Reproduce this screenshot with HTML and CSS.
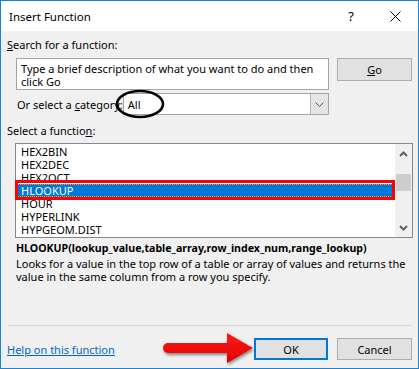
FILE: index.html
```html
<!DOCTYPE html>
<html lang="en">
<head>
    <meta charset="UTF-8">
    <title>Insert Function</title>
    <link rel="stylesheet" href="styles.css">
</head>
<body>
<div class="dialog">
    <div class="titlebar">
        <span class="title">Insert Function</span>
        <span class="help-btn">?</span>
        <span class="close-btn">
            <svg width="11" height="11" viewBox="0 0 11 11"><path d="M0.5 0.5 L10.5 10.5 M10.5 0.5 L0.5 10.5" stroke="#000" stroke-width="1" fill="none"/></svg>
        </span>
    </div>
    <div class="content">
        <div class="label"><u>S</u>earch for a function:</div>
        <div class="search-row">
            <div class="search-box">Type a brief description of what you want to do and then<br>click Go</div>
            <div class="btn go-btn"><u>G</u>o</div>
        </div>
        <div class="category-row">
            <span class="category-label">Or select a <u>c</u>ategory:</span>
            <div class="select">
                <span class="select-value">All</span>
                <span class="select-arrow">
                    <svg width="9" height="5" viewBox="0 0 9 5"><path d="M0.5 0.5 L4.5 4.5 L8.5 0.5" stroke="#555" fill="none"/></svg>
                </span>
            </div>
            <svg class="circle-mark" width="50" height="30" viewBox="0 0 50 30"><ellipse cx="25" cy="15" rx="23" ry="13" stroke="#000" stroke-width="2.6" fill="none"/></svg>
        </div>
        <div class="label label-list">Select a functio<u>n</u>:</div>
        <div class="listbox">
            <ul class="items">
                <li>HEX2BIN</li>
                <li>HEX2DEC</li>
                <li>HEX2OCT</li>
                <li class="selected">HLOOKUP</li>
                <li>HOUR</li>
                <li>HYPERLINK</li>
                <li>HYPGEOM.DIST</li>
            </ul>
            <div class="scrollbar">
                <svg class="scroll-up" width="9" height="6" viewBox="0 0 9 6"><path d="M1 5 L4.5 1.5 L8 5" stroke="#606060" stroke-width="2" fill="none"/></svg>
                <div class="thumb"></div>
                <svg class="scroll-down" width="9" height="6" viewBox="0 0 9 6"><path d="M1 1 L4.5 4.5 L8 1" stroke="#606060" stroke-width="2" fill="none"/></svg>
            </div>
            <div class="red-box"></div>
        </div>
        <div class="signature">HLOOKUP(lookup_value,table_array,row_index_num,range_lookup)</div>
        <div class="description">Looks for a value in the top row of a table or array of values and returns the<br>value in the same column from a row you specify.</div>
        <div class="separator"></div>
        <div class="footer">
            <a class="help-link" href="#">Help on this function</a>
            <svg class="arrow" width="100" height="40" viewBox="0 0 100 40">
                <defs>
                    <filter id="shadow" x="-20%" y="-30%" width="140%" height="170%">
                        <feDropShadow dx="1" dy="2" stdDeviation="1.5" flood-color="#000" flood-opacity="0.45"/>
                    </filter>
                    <linearGradient id="red" x1="0" y1="0" x2="0" y2="1">
                        <stop offset="0" stop-color="#ff1a1a"/>
                        <stop offset="1" stop-color="#e00000"/>
                    </linearGradient>
                </defs>
                <path d="M8 13 L67 13 L67 3 L93 18 L67 33 L67 23 L8 23 A5 5 0 0 1 8 13 Z" fill="url(#red)" filter="url(#shadow)"/>
            </svg>
            <div class="btn ok-btn">OK</div>
            <div class="btn cancel-btn">Cancel</div>
        </div>
    </div>
</div>
</body>
</html>
```

FILE: styles.css
```css
body {
    margin: 0;
    font-family: "Noto Sans", "Open Sans", sans-serif;
    font-size: 11px;
    color: #000;
    background: #fff;
}
.dialog {
    width: 419px;
    height: 369px;
    box-sizing: border-box;
    border: 1px solid #1883d7;
    background-color: #f0f0f0;
    overflow: hidden;
}
.titlebar {
    height: 30px;
    background-color: #fff;
    display: flex;
    align-items: center;
    padding-left: 8px;
}
.title {
    flex: 1;
    font-size: 11.5px;
}
.help-btn {
    font-size: 13px;
    margin-right: 36px;
}
.close-btn {
    display: flex;
    margin-right: 17px;
    margin-top: 1px;
}
.content {
    padding: 7px 6px 0 6px;
}
.label {
    line-height: 14px;
}
.search-row {
    display: flex;
    align-items: flex-start;
    margin-top: 6px;
    margin-left: 9px;
    gap: 8px;
}
.search-box {
    width: 313px;
    height: 32px;
    box-sizing: border-box;
    border: 1px solid #a5a5a5;
    background-color: #fff;
    padding: 3px 4px 0 4px;
    line-height: 13px;
    white-space: nowrap;
}
.btn {
    height: 22px;
    box-sizing: border-box;
    border: 1px solid #adadad;
    background-color: #e1e1e1;
    display: flex;
    align-items: center;
    justify-content: center;
}
.go-btn {
    width: 75px;
    height: 23px;
}
.category-row {
    position: relative;
    display: flex;
    align-items: center;
    margin-top: 3px;
    height: 22px;
}
.category-label {
    flex: 1;
    padding-left: 10px;
    white-space: nowrap;
}
.select {
    width: 207px;
    height: 22px;
    box-sizing: border-box;
    margin-right: 83px;
    border: 1px solid #a5a5a5;
    background-color: #fff;
    display: flex;
    align-items: center;
}
.select-value {
    flex: 1;
    padding-left: 4px;
}
.select-arrow {
    width: 17px;
    height: 20px;
    background-color: #e5e5e5;
    border-left: 1px solid #b5b5b5;
    display: flex;
    align-items: center;
    justify-content: center;
}
.circle-mark {
    position: absolute;
    left: 108px;
    top: -4px;
}
.label-list {
    margin-top: 9px;
}
.listbox {
    position: relative;
    margin-top: 5px;
    margin-left: 8px;
    width: 398px;
    height: 95px;
    box-sizing: border-box;
    border: 1px solid #828790;
    background-color: #fff;
    display: flex;
}
.items {
    list-style: none;
    margin: 0;
    padding: 1px 0 0 0;
    flex: 1;
}
.items li {
    height: 13px;
    line-height: 13px;
    padding-left: 5px;
}
.items li.selected {
    background-color: #0078d7;
    color: #fff;
    outline: 1px dotted #f0a030;
    outline-offset: -1px;
}
.scrollbar {
    width: 17px;
    background-color: #f0f0f0;
    display: flex;
    flex-direction: column;
    align-items: center;
}
.scroll-up {
    margin-top: 7px;
}
.thumb {
    width: 15px;
    height: 17px;
    background-color: #cdcdcd;
    margin-top: 17px;
}
.scroll-down {
    margin-top: auto;
    margin-bottom: 6px;
}
.red-box {
    position: absolute;
    left: -1px;
    top: 36px;
    width: 380px;
    height: 20px;
    border: 3px solid #ff0000;
    box-sizing: border-box;
}
.signature {
    font-weight: bold;
    font-size: 10.6px;
    margin-top: 3px;
    margin-left: 9px;
    line-height: 14px;
}
.description {
    margin-top: 2px;
    margin-left: 9px;
    line-height: 13px;
    white-space: nowrap;
}
.separator {
    height: 1px;
    background-color: #d9d9d9;
    margin-top: 42px;
    margin-left: 1px;
    width: 404px;
}
.footer {
    position: relative;
    display: flex;
    align-items: center;
    margin-top: 12px;
    gap: 9px;
}
.help-link {
    flex: 1;
    color: #0066cc;
    text-decoration: underline;
}
.arrow {
    position: absolute;
    left: 153px;
    top: -8px;
}
.ok-btn {
    width: 74px;
    border: 2px solid #0078d7;
}
.cancel-btn {
    width: 75px;
}
```
